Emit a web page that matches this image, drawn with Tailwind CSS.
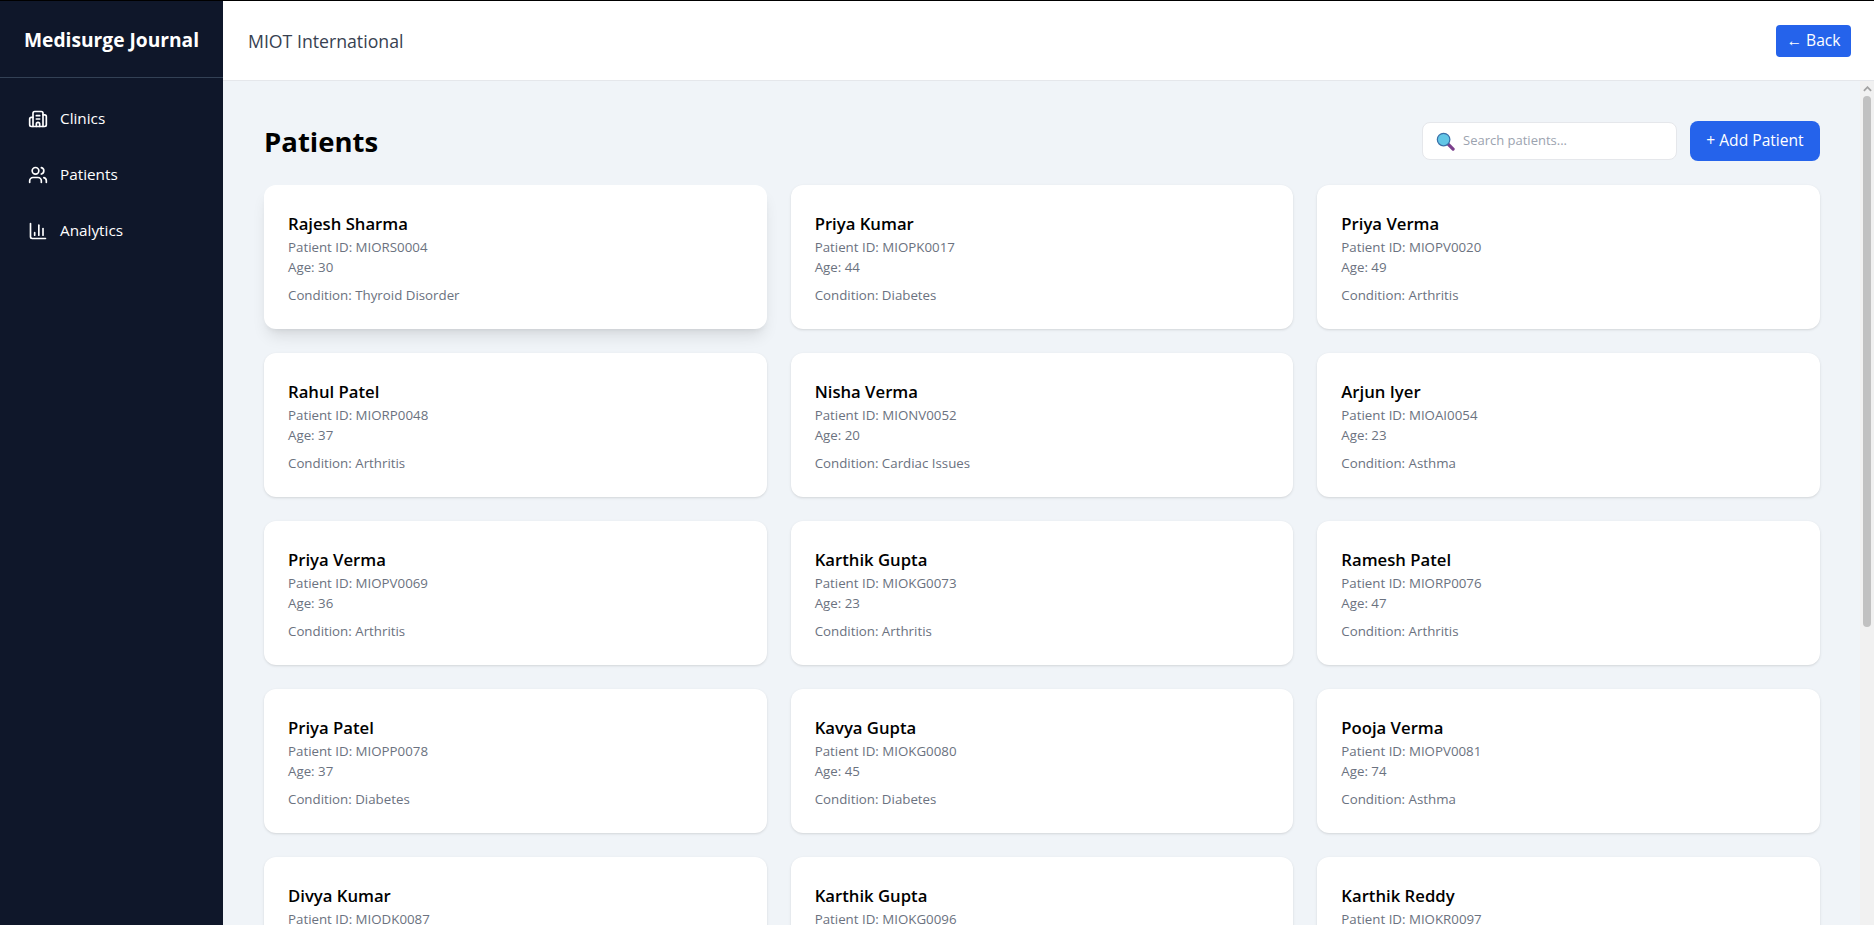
<!DOCTYPE html>
<html lang="en">
<head>
    <meta charset="UTF-8">
    <title>Medisurge Journal</title>
    <script src="https://cdn.jsdelivr.net/npm/@tailwindcss/browser@4"></script>
</head>
<body class="h-[925px] overflow-hidden bg-black pt-px font-['Open_Sans','Noto_Sans',sans-serif]">
<div class="flex h-[924px]">
    <!-- Sidebar -->
    <aside class="w-[223px] shrink-0 bg-[#0f172a] text-white">
        <div class="h-[77px] border-b border-[#334155] flex items-center pl-[24px] pt-[2px]">
            <span class="text-[19.2px] font-bold whitespace-nowrap">Medisurge Journal</span>
        </div>
        <nav class="pt-[25px] pl-[28px] text-[15.3px] flex flex-col gap-[25px]">
            <a class="flex items-center gap-[12px] h-[31px]">
                <svg class="w-[20px] h-[20px]" viewBox="0 0 24 24" fill="none" stroke="currentColor" stroke-width="2" stroke-linecap="round" stroke-linejoin="round"><path d="M10 12h4"/><path d="M10 8h4"/><path d="M14 21v-3a2 2 0 0 0-4 0v3"/><path d="M6 10H4a2 2 0 0 0-2 2v7a2 2 0 0 0 2 2h16a2 2 0 0 0 2-2V9a2 2 0 0 0-2-2h-2"/><path d="M6 21V5a2 2 0 0 1 2-2h8a2 2 0 0 1 2 2v16"/></svg>
                Clinics
            </a>
            <a class="flex items-center gap-[12px] h-[31px]">
                <svg class="w-[20px] h-[20px]" viewBox="0 0 24 24" fill="none" stroke="currentColor" stroke-width="2" stroke-linecap="round" stroke-linejoin="round"><path d="M16 21v-2a4 4 0 0 0-4-4H6a4 4 0 0 0-4 4v2"/><circle cx="9" cy="7" r="4"/><path d="M22 21v-2a4 4 0 0 0-3-3.87"/><path d="M16 3.13a4 4 0 0 1 0 7.75"/></svg>
                Patients
            </a>
            <a class="flex items-center gap-[12px] h-[31px]">
                <svg class="w-[20px] h-[20px]" viewBox="0 0 24 24" fill="none" stroke="currentColor" stroke-width="2" stroke-linecap="round" stroke-linejoin="round"><path d="M3 3v16a2 2 0 0 0 2 2h16"/><path d="M18 17V9"/><path d="M13 17V5"/><path d="M8 17v-3"/></svg>
                Analytics
            </a>
        </nav>
    </aside>

    <div class="flex-1 min-w-0 flex flex-col">
        <!-- Header -->
        <header class="h-[80px] shrink-0 bg-white border-b border-[#e5e7eb] flex items-center justify-between pl-[25px] pr-[23px]">
            <span class="text-[17.7px] font-medium text-[#374151] pt-[2px]">MIOT International</span>
            <button class="h-[32px] w-[75px] rounded-[4px] bg-[#2563eb] text-white text-[15.6px]">← Back</button>
        </header>

        <div class="flex-1 min-h-0 flex">
            <!-- Main -->
            <main class="flex-1 min-w-0 overflow-hidden bg-[#f0f4f8] pl-[41px] pr-[40px] pt-[40px]">
                <div class="flex items-center justify-between h-[40px] mb-[24px]">
                    <h1 class="text-[27.5px] font-bold text-black pt-[2px]">Patients</h1>
                    <div class="flex items-center gap-[13px]">
                        <div class="w-[255px] h-[38px] bg-white border border-[#e5e7eb] rounded-[8px] flex items-center pl-[13px] gap-[8px]">
                            <svg class="w-[19px] h-[19px]" viewBox="0 0 20 20"><path d="M12.5 12.5l5.5 5.5" stroke="#7b3f8c" stroke-width="3.4" stroke-linecap="round"/><circle cx="8" cy="8" r="6.6" fill="#62c6e6" stroke="#3a6fa8" stroke-width="1.3"/></svg>
                            <span class="text-[13px] text-[#9ca3af]">Search patients...</span>
                        </div>
                        <button class="w-[130px] h-[40px] rounded-[8px] bg-[#2563eb] text-white text-[15.6px] font-medium">+ Add Patient</button>
                    </div>
                </div>

                <div class="grid grid-cols-3 gap-[24px]">
                    <div class="h-[144px] bg-white rounded-[12px] px-[24px] pt-[26px] shadow-lg">
                        <h3 class="text-[16.7px] leading-[26px] font-semibold text-black">Rajesh Sharma</h3>
                        <p class="text-[13.3px] leading-[20px] text-[#6b7280]">Patient ID: MIORS0004</p>
                        <p class="text-[13.3px] leading-[20px] text-[#6b7280]">Age: 30</p>
                        <p class="text-[13.3px] leading-[20px] text-[#6b7280] mt-[8px]">Condition: Thyroid Disorder</p>
                    </div>
                    <div class="h-[144px] bg-white rounded-[12px] px-[24px] pt-[26px] shadow">
                        <h3 class="text-[16.7px] leading-[26px] font-semibold text-black">Priya Kumar</h3>
                        <p class="text-[13.3px] leading-[20px] text-[#6b7280]">Patient ID: MIOPK0017</p>
                        <p class="text-[13.3px] leading-[20px] text-[#6b7280]">Age: 44</p>
                        <p class="text-[13.3px] leading-[20px] text-[#6b7280] mt-[8px]">Condition: Diabetes</p>
                    </div>
                    <div class="h-[144px] bg-white rounded-[12px] px-[24px] pt-[26px] shadow">
                        <h3 class="text-[16.7px] leading-[26px] font-semibold text-black">Priya Verma</h3>
                        <p class="text-[13.3px] leading-[20px] text-[#6b7280]">Patient ID: MIOPV0020</p>
                        <p class="text-[13.3px] leading-[20px] text-[#6b7280]">Age: 49</p>
                        <p class="text-[13.3px] leading-[20px] text-[#6b7280] mt-[8px]">Condition: Arthritis</p>
                    </div>
                    <div class="h-[144px] bg-white rounded-[12px] px-[24px] pt-[26px] shadow">
                        <h3 class="text-[16.7px] leading-[26px] font-semibold text-black">Rahul Patel</h3>
                        <p class="text-[13.3px] leading-[20px] text-[#6b7280]">Patient ID: MIORP0048</p>
                        <p class="text-[13.3px] leading-[20px] text-[#6b7280]">Age: 37</p>
                        <p class="text-[13.3px] leading-[20px] text-[#6b7280] mt-[8px]">Condition: Arthritis</p>
                    </div>
                    <div class="h-[144px] bg-white rounded-[12px] px-[24px] pt-[26px] shadow">
                        <h3 class="text-[16.7px] leading-[26px] font-semibold text-black">Nisha Verma</h3>
                        <p class="text-[13.3px] leading-[20px] text-[#6b7280]">Patient ID: MIONV0052</p>
                        <p class="text-[13.3px] leading-[20px] text-[#6b7280]">Age: 20</p>
                        <p class="text-[13.3px] leading-[20px] text-[#6b7280] mt-[8px]">Condition: Cardiac Issues</p>
                    </div>
                    <div class="h-[144px] bg-white rounded-[12px] px-[24px] pt-[26px] shadow">
                        <h3 class="text-[16.7px] leading-[26px] font-semibold text-black">Arjun Iyer</h3>
                        <p class="text-[13.3px] leading-[20px] text-[#6b7280]">Patient ID: MIOAI0054</p>
                        <p class="text-[13.3px] leading-[20px] text-[#6b7280]">Age: 23</p>
                        <p class="text-[13.3px] leading-[20px] text-[#6b7280] mt-[8px]">Condition: Asthma</p>
                    </div>
                    <div class="h-[144px] bg-white rounded-[12px] px-[24px] pt-[26px] shadow">
                        <h3 class="text-[16.7px] leading-[26px] font-semibold text-black">Priya Verma</h3>
                        <p class="text-[13.3px] leading-[20px] text-[#6b7280]">Patient ID: MIOPV0069</p>
                        <p class="text-[13.3px] leading-[20px] text-[#6b7280]">Age: 36</p>
                        <p class="text-[13.3px] leading-[20px] text-[#6b7280] mt-[8px]">Condition: Arthritis</p>
                    </div>
                    <div class="h-[144px] bg-white rounded-[12px] px-[24px] pt-[26px] shadow">
                        <h3 class="text-[16.7px] leading-[26px] font-semibold text-black">Karthik Gupta</h3>
                        <p class="text-[13.3px] leading-[20px] text-[#6b7280]">Patient ID: MIOKG0073</p>
                        <p class="text-[13.3px] leading-[20px] text-[#6b7280]">Age: 23</p>
                        <p class="text-[13.3px] leading-[20px] text-[#6b7280] mt-[8px]">Condition: Arthritis</p>
                    </div>
                    <div class="h-[144px] bg-white rounded-[12px] px-[24px] pt-[26px] shadow">
                        <h3 class="text-[16.7px] leading-[26px] font-semibold text-black">Ramesh Patel</h3>
                        <p class="text-[13.3px] leading-[20px] text-[#6b7280]">Patient ID: MIORP0076</p>
                        <p class="text-[13.3px] leading-[20px] text-[#6b7280]">Age: 47</p>
                        <p class="text-[13.3px] leading-[20px] text-[#6b7280] mt-[8px]">Condition: Arthritis</p>
                    </div>
                    <div class="h-[144px] bg-white rounded-[12px] px-[24px] pt-[26px] shadow">
                        <h3 class="text-[16.7px] leading-[26px] font-semibold text-black">Priya Patel</h3>
                        <p class="text-[13.3px] leading-[20px] text-[#6b7280]">Patient ID: MIOPP0078</p>
                        <p class="text-[13.3px] leading-[20px] text-[#6b7280]">Age: 37</p>
                        <p class="text-[13.3px] leading-[20px] text-[#6b7280] mt-[8px]">Condition: Diabetes</p>
                    </div>
                    <div class="h-[144px] bg-white rounded-[12px] px-[24px] pt-[26px] shadow">
                        <h3 class="text-[16.7px] leading-[26px] font-semibold text-black">Kavya Gupta</h3>
                        <p class="text-[13.3px] leading-[20px] text-[#6b7280]">Patient ID: MIOKG0080</p>
                        <p class="text-[13.3px] leading-[20px] text-[#6b7280]">Age: 45</p>
                        <p class="text-[13.3px] leading-[20px] text-[#6b7280] mt-[8px]">Condition: Diabetes</p>
                    </div>
                    <div class="h-[144px] bg-white rounded-[12px] px-[24px] pt-[26px] shadow">
                        <h3 class="text-[16.7px] leading-[26px] font-semibold text-black">Pooja Verma</h3>
                        <p class="text-[13.3px] leading-[20px] text-[#6b7280]">Patient ID: MIOPV0081</p>
                        <p class="text-[13.3px] leading-[20px] text-[#6b7280]">Age: 74</p>
                        <p class="text-[13.3px] leading-[20px] text-[#6b7280] mt-[8px]">Condition: Asthma</p>
                    </div>
                    <div class="h-[144px] bg-white rounded-[12px] px-[24px] pt-[26px] shadow">
                        <h3 class="text-[16.7px] leading-[26px] font-semibold text-black">Divya Kumar</h3>
                        <p class="text-[13.3px] leading-[20px] text-[#6b7280]">Patient ID: MIODK0087</p>
                    </div>
                    <div class="h-[144px] bg-white rounded-[12px] px-[24px] pt-[26px] shadow">
                        <h3 class="text-[16.7px] leading-[26px] font-semibold text-black">Karthik Gupta</h3>
                        <p class="text-[13.3px] leading-[20px] text-[#6b7280]">Patient ID: MIOKG0096</p>
                    </div>
                    <div class="h-[144px] bg-white rounded-[12px] px-[24px] pt-[26px] shadow">
                        <h3 class="text-[16.7px] leading-[26px] font-semibold text-black">Karthik Reddy</h3>
                        <p class="text-[13.3px] leading-[20px] text-[#6b7280]">Patient ID: MIOKR0097</p>
                    </div>
                </div>
            </main>

            <!-- Scrollbar -->
            <div class="w-[14px] shrink-0 bg-[#f1f1f1] flex flex-col items-center pt-[5px]">
                <svg class="w-[9px] h-[6px] mb-[4px]" viewBox="0 0 10 6"><path d="M1 5l4-4 4 4" fill="none" stroke="#a3a3a3" stroke-width="2"/></svg>
                <div class="w-[8px] h-[531px] rounded-[4px] bg-[#c1c1c1]"></div>
            </div>
        </div>
    </div>
</div>
</body>
</html>
